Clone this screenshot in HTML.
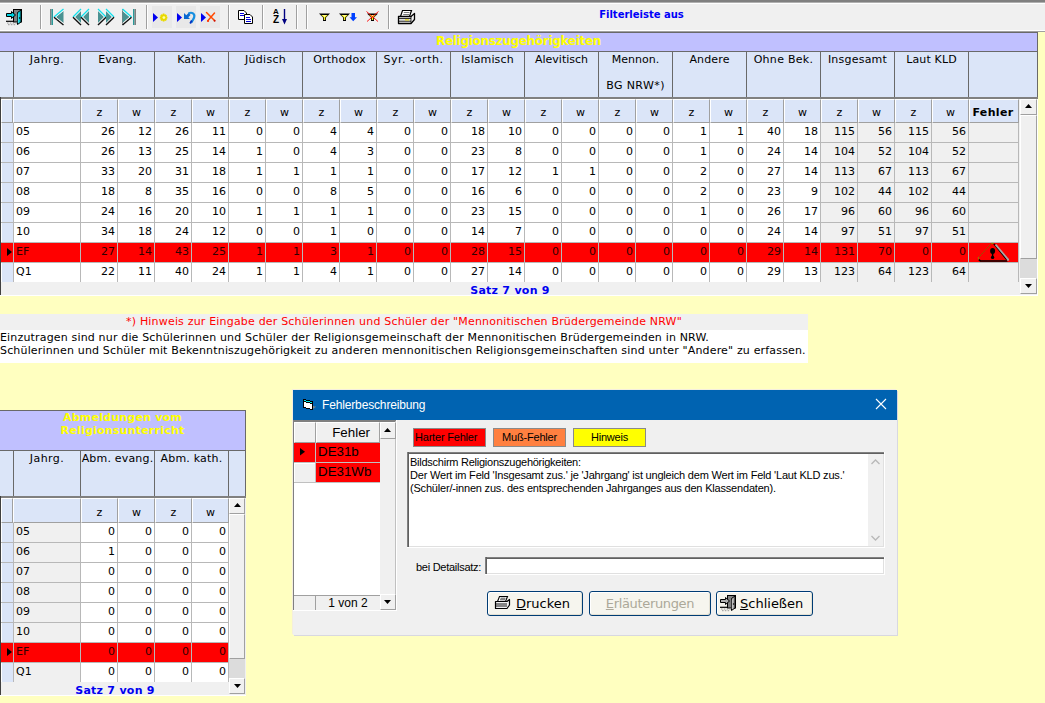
<!DOCTYPE html>
<html lang="de"><head><meta charset="utf-8"><title>Religionszugehörigkeiten</title>
<style>
html,body{margin:0;padding:0;}
body{width:1045px;height:703px;overflow:hidden;background:#ffffc0;position:relative;font-family:"DejaVu Sans","Liberation Sans",sans-serif;font-size:11px;color:#000;}
div,span{position:absolute;box-sizing:border-box;white-space:nowrap;}
svg{position:absolute;overflow:visible;}
.t{font-size:11px;line-height:13px;height:13px;}
.r{text-align:right;}
.c{text-align:center;}
.b{font-weight:bold;}
.sh{background:#dbe5f8;border-left:1px solid #fff;border-top:1px solid #fff;border-right:1px solid #a0a0a0;border-bottom:1px solid #a0a0a0;}
.ar{font-family:"Liberation Sans",sans-serif;}
.btn{background:#f6f5ee;border:1px solid #003c74;border-radius:3px;font-size:13px;line-height:15px;box-shadow:inset -1px -1px 0 #e4e1d4, inset 1px 1px 0 #fff;}
</style></head><body>

<div style="left:0px;top:0px;width:1045px;height:2px;background:#808080;"></div>
<div style="left:0px;top:2px;width:1045px;height:1px;background:#b0b0b0;"></div>
<div style="left:0px;top:3px;width:1045px;height:1px;background:#ffffff;"></div>
<div style="left:0px;top:4px;width:1045px;height:26px;background:#f0f0f0;"></div>
<div style="left:0px;top:30px;width:1045px;height:1px;background:#ffffff;"></div>
<div style="left:0px;top:31px;width:1045px;height:1px;background:#a0a0a0;"></div>
<svg style="left:0px;top:0px" width="30" height="30" viewBox="0 0 30 30"><rect x="13.5" y="9.5" width="8" height="12.5" fill="#808080" stroke="#000" stroke-width="1"/><path d="M17.5 12.5 L21 10 L21 22 L17.5 24.5 Z" fill="#00c8d4" stroke="#000" stroke-width="1" stroke-linejoin="round"/><path d="M18.2 13.5 V23" stroke="#60f0f8" stroke-width="0.8"/><circle cx="19.6" cy="18" r="0.8" fill="#000"/><path d="M6.5 13.5 H11.5 V11.5 L15.5 15 L11.5 18.5 V16.5 H6.5 Z" fill="#00d0dc" stroke="#000" stroke-width="1" stroke-linejoin="round"/><path d="M6 21.3 H13.5" stroke="#000" stroke-width="1.2"/><path d="M7 23 H17 M8 24.7 H16" stroke="#909090" stroke-width="0.9" stroke-dasharray="1.6 1.2"/></svg>
<div style="left:40px;top:5px;width:1px;height:24px;background:#a0a0a0;"></div>
<div style="left:41px;top:5px;width:1px;height:24px;background:#ffffff;"></div>
<svg style="left:0px;top:0px" width="140" height="30" viewBox="0 0 140 30"><rect x="50" y="9" width="1.5" height="16" fill="#808080"/><rect x="51.5" y="9" width="1.5" height="16" fill="#2a9a9a"/><path d="M56.1 17.0 L63.5 10.9 L63.5 23.1 Z" fill="#4a9292"/><path d="M55.3 17.0 L63.5 10.3" stroke="#ffffff" stroke-width="0.8" fill="none"/><path d="M55.3 17.0 L63.5 23.7" stroke="#ffffff" stroke-width="0.8" fill="none"/><path d="M54 17.0 L63.5 9" stroke="#10e0ec" stroke-width="1.3" fill="none"/><path d="M54 17.3 L63.5 25" stroke="#101010" stroke-width="1.4" fill="none"/><path d="M75.1 17.0 L81 10.9 L81 23.1 Z" fill="#4a9292"/><path d="M74.3 17.0 L81 10.3" stroke="#ffffff" stroke-width="0.8" fill="none"/><path d="M74.3 17.0 L81 23.7" stroke="#ffffff" stroke-width="0.8" fill="none"/><path d="M73 17.0 L81 9" stroke="#10e0ec" stroke-width="1.3" fill="none"/><path d="M73 17.3 L81 25" stroke="#101010" stroke-width="1.4" fill="none"/><path d="M83.1 17.0 L89 10.9 L89 23.1 Z" fill="#4a9292"/><path d="M82.3 17.0 L89 10.3" stroke="#ffffff" stroke-width="0.8" fill="none"/><path d="M82.3 17.0 L89 23.7" stroke="#ffffff" stroke-width="0.8" fill="none"/><path d="M81 17.0 L89 9" stroke="#10e0ec" stroke-width="1.3" fill="none"/><path d="M81 17.3 L89 25" stroke="#101010" stroke-width="1.4" fill="none"/><path d="M103.9 17.0 L98 10.9 L98 23.1 Z" fill="#4a9292"/><path d="M104.7 17.0 L98 10.3" stroke="#ffffff" stroke-width="0.8" fill="none"/><path d="M104.7 17.0 L98 23.7" stroke="#ffffff" stroke-width="0.8" fill="none"/><path d="M98 9 L106 17.0" stroke="#10e0ec" stroke-width="1.3" fill="none"/><path d="M106 17.3 L98 25" stroke="#101010" stroke-width="1.4" fill="none"/><path d="M111.9 17.0 L106 10.9 L106 23.1 Z" fill="#4a9292"/><path d="M112.7 17.0 L106 10.3" stroke="#ffffff" stroke-width="0.8" fill="none"/><path d="M112.7 17.0 L106 23.7" stroke="#ffffff" stroke-width="0.8" fill="none"/><path d="M106 9 L114 17.0" stroke="#10e0ec" stroke-width="1.3" fill="none"/><path d="M114 17.3 L106 25" stroke="#101010" stroke-width="1.4" fill="none"/><rect x="122" y="9" width="1.2" height="16" fill="#808080"/><path d="M129.4 17.0 L122.5 10.9 L122.5 23.1 Z" fill="#4a9292"/><path d="M130.2 17.0 L122.5 10.3" stroke="#ffffff" stroke-width="0.8" fill="none"/><path d="M130.2 17.0 L122.5 23.7" stroke="#ffffff" stroke-width="0.8" fill="none"/><path d="M122.5 9 L131.5 17.0" stroke="#10e0ec" stroke-width="1.3" fill="none"/><path d="M131.5 17.3 L122.5 25" stroke="#101010" stroke-width="1.4" fill="none"/><rect x="133" y="9" width="1.5" height="16" fill="#2a9a9a"/><rect x="134.5" y="9" width="1.5" height="16" fill="#808080"/></svg>
<div style="left:146px;top:5px;width:1px;height:24px;background:#a0a0a0;"></div>
<div style="left:147px;top:5px;width:1px;height:24px;background:#ffffff;"></div>
<div style="left:152px;top:6px;width:20px;height:22px;background:#e8e8e8;"></div>
<svg style="left:152px;top:6px" width="20" height="22" viewBox="0 0 20 22"><path d="M1 7 L6 11.5 L1 16 Z" fill="#0000f0"/></svg>
<div style="left:176px;top:6px;width:20px;height:22px;background:#e8e8e8;"></div>
<svg style="left:176px;top:6px" width="20" height="22" viewBox="0 0 20 22"><path d="M1 7 L6 11.5 L1 16 Z" fill="#0000f0"/></svg>
<div style="left:200px;top:6px;width:20px;height:22px;background:#e8e8e8;"></div>
<svg style="left:200px;top:6px" width="20" height="22" viewBox="0 0 20 22"><path d="M1 7 L6 11.5 L1 16 Z" fill="#0000f0"/></svg>
<svg style="left:152px;top:6px" width="20" height="22" viewBox="0 0 20 22"><circle cx="11.6" cy="11.6" r="3.3" fill="#f4e400"/><path d="M11.6 7.6 V15.6 M7.8 11.6 H15.4 M8.9 8.9 L14.3 14.3 M14.3 8.9 L8.9 14.3" stroke="#e8d800" stroke-width="1.7"/><circle cx="11.9" cy="11.6" r="1.4" fill="#ffffa0"/></svg>
<svg style="left:176px;top:6px" width="20" height="22" viewBox="0 0 20 22"><path d="M12.5 7.5 C16 5.5 19 8 18.2 11 C17.8 13 16.5 14 15.5 16.5" stroke="#1890e0" stroke-width="2.2" fill="none"/><path d="M15.8 14.5 L14.2 17.5" stroke="#0030c0" stroke-width="1.8"/><path d="M8 7 L8 13 L14 13 L12.3 11.2 L14.5 9 L12.5 7 L10.3 9.2 Z" fill="#0868d0"/></svg>
<svg style="left:200px;top:6px" width="20" height="22" viewBox="0 0 20 22"><path d="M6.5 6.5 L14.5 14.5 M14.5 7 L8 14.5" stroke="#ff4800" stroke-width="1.5" stroke-linecap="round"/><circle cx="8" cy="15" r="1.1" fill="#ff3000"/><circle cx="14.6" cy="14.8" r="1" fill="#d01000"/></svg>
<div style="left:228px;top:5px;width:1px;height:24px;background:#a0a0a0;"></div>
<div style="left:229px;top:5px;width:1px;height:24px;background:#ffffff;"></div>
<svg style="left:236px;top:8px" width="20" height="18" viewBox="0 0 20 18"><path d="M2.5 2.5 H8 L10.5 5 V11.5 H2.5 Z" fill="#fff" stroke="#000" stroke-width="1"/><path d="M4 5.5 H8 M4 7.5 H8" stroke="#0000e0" stroke-width="1"/><path d="M8.5 6.5 H14 L16.5 9 V15.5 H8.5 Z" fill="#fff" stroke="#000" stroke-width="1"/><path d="M10 9.5 H14 M10 11.5 H15 M10 13.5 H15" stroke="#0000e0" stroke-width="1"/></svg>
<div style="left:262px;top:5px;width:1px;height:24px;background:#a0a0a0;"></div>
<div style="left:263px;top:5px;width:1px;height:24px;background:#ffffff;"></div>
<div style="left:271px;top:8px;width:10px;height:8px;font-family:'Liberation Sans',sans-serif;font-size:8px;line-height:8px;font-weight:bold;text-align:center;">A</div>
<div style="left:271px;top:15px;width:10px;height:10px;font-family:'Liberation Sans',sans-serif;font-size:10px;line-height:10px;font-weight:bold;text-align:center;">Z</div>
<svg style="left:280px;top:8px" width="10" height="18" viewBox="0 0 10 18"><path d="M4.5 1 V13" stroke="#000080" stroke-width="1.4"/><path d="M2 11 L4.5 16.5 L7 11 Z" fill="#000080"/></svg>
<div style="left:296px;top:5px;width:1px;height:24px;background:#a0a0a0;"></div>
<div style="left:297px;top:5px;width:1px;height:24px;background:#ffffff;"></div>
<div style="left:306px;top:5px;width:1px;height:24px;background:#a0a0a0;"></div>
<div style="left:307px;top:5px;width:1px;height:24px;background:#ffffff;"></div>
<svg style="left:0px;top:0px" width="400" height="30" viewBox="0 0 400 30"><path d="M319 13.6 H330 L326 17.6 V21 H323 V17.6 Z" fill="#000"/><path d="M321.2 14.9 H327.8 L325.2 17.4 V20 H323.8 V17.4 Z" fill="#f8f020"/><path d="M322.6 15.2 H326.4 L324.5 17 Z" fill="#ffffb0"/><path d="M339 13.6 H350 L346 17.6 V21 H343 V17.6 Z" fill="#000"/><path d="M341.2 14.9 H347.8 L345.2 17.4 V20 H343.8 V17.4 Z" fill="#f8f020"/><path d="M342.6 15.2 H346.4 L344.5 17 Z" fill="#ffffb0"/><path d="M351.5 13 H355 V17.3 H357 L353.2 21.3 L349.5 17.3 H351.5 Z" fill="#0040ff"/><path d="M367 13.6 H378 L374 17.6 V21 H371 V17.6 Z" fill="#000"/><path d="M369.2 14.9 H375.8 L373.2 17.4 V20 H371.8 V17.4 Z" fill="#f8f020"/><path d="M370.6 15.2 H374.4 L372.5 17 Z" fill="#ffffb0"/><path d="M366.5 11.5 L378 21.5 M378.5 11.5 L367 21.5" stroke="#ff0000" stroke-width="0.9"/></svg>
<div style="left:388px;top:5px;width:1px;height:24px;background:#a0a0a0;"></div>
<div style="left:389px;top:5px;width:1px;height:24px;background:#ffffff;"></div>
<svg style="left:396px;top:8px" width="22" height="18" viewBox="0 0 22 18"><path d="M6.5 2.5 H15.5 L13.5 8.5 H4.5 Z" fill="#fff" stroke="#000" stroke-width="1.2"/><path d="M7.8 4.5 H13.5 M7.2 6.5 H13" stroke="#404040" stroke-width="0.7"/><path d="M2.5 8.5 H15 L18.5 5.5 V11.5 L15 15.5 H2.5 Z" fill="#f4f4f4" stroke="#000" stroke-width="1.3" stroke-linejoin="round"/><path d="M3 10.6 H15 M3 13.2 H15" stroke="#000" stroke-width="0.9"/><path d="M15 8.5 V15.5" stroke="#000" stroke-width="0.8"/><path d="M9 11.9 H13" stroke="#e8d800" stroke-width="1.2"/></svg>
<div style="left:561.5px;top:8px;width:160px;height:13px;font-size:10px;line-height:13px;color:#0000f8;font-weight:bold;text-align:center;">Filterleiste aus</div>
<div style="left:0px;top:32px;width:1038px;height:20px;background:#696969;"></div>
<div style="left:0px;top:33px;width:1037px;height:18px;background:#c0c0ff;"></div>
<div style="left:0px;top:34px;width:1037px;height:14px;font-size:12px;line-height:14px;font-weight:bold;color:#ffff00;text-align:center;letter-spacing:-0.3px;">Religionszugehörigkeiten</div>
<div style="left:0px;top:52px;width:1038px;height:45px;background:#696969;"></div>
<div style="left:0px;top:52px;width:13px;height:45px;background:#dbe5f8;"></div>
<div style="left:14px;top:52px;width:66px;height:45px;background:#dbe5f8;"></div>
<div class="t c" style="left:14px;top:53px;width:66px;height:13px;letter-spacing:0.45px;">Jahrg.</div>
<div style="left:81px;top:52px;width:73px;height:45px;background:#dbe5f8;"></div>
<div class="t c" style="left:81px;top:53px;width:73px;height:13px;letter-spacing:0.15px;">Evang.</div>
<div style="left:155px;top:52px;width:73px;height:45px;background:#dbe5f8;"></div>
<div class="t c" style="left:155px;top:53px;width:73px;height:13px;letter-spacing:0.04px;">Kath.</div>
<div style="left:229px;top:52px;width:73px;height:45px;background:#dbe5f8;"></div>
<div class="t c" style="left:229px;top:53px;width:73px;height:13px;letter-spacing:0.31px;">Jüdisch</div>
<div style="left:303px;top:52px;width:73px;height:45px;background:#dbe5f8;"></div>
<div class="t c" style="left:303px;top:53px;width:73px;height:13px;letter-spacing:0.2px;">Orthodox</div>
<div style="left:377px;top:52px;width:73px;height:45px;background:#dbe5f8;"></div>
<div class="t c" style="left:377px;top:53px;width:73px;height:13px;letter-spacing:0.53px;">Syr. -orth.</div>
<div style="left:451px;top:52px;width:73px;height:45px;background:#dbe5f8;"></div>
<div class="t c" style="left:451px;top:53px;width:73px;height:13px;letter-spacing:0.14px;">Islamisch</div>
<div style="left:525px;top:52px;width:73px;height:45px;background:#dbe5f8;"></div>
<div class="t c" style="left:525px;top:53px;width:73px;height:13px;letter-spacing:0px;">Alevitisch</div>
<div style="left:599px;top:52px;width:73px;height:45px;background:#dbe5f8;"></div>
<div class="t c" style="left:599px;top:53px;width:73px;height:13px;letter-spacing:0px;">Mennon.</div>
<div class="t c" style="left:599px;top:79px;width:73px;height:13px;letter-spacing:0.4px;">BG NRW*)</div>
<div style="left:673px;top:52px;width:73px;height:45px;background:#dbe5f8;"></div>
<div class="t c" style="left:673px;top:53px;width:73px;height:13px;letter-spacing:0.15px;">Andere</div>
<div style="left:747px;top:52px;width:73px;height:45px;background:#dbe5f8;"></div>
<div class="t c" style="left:747px;top:53px;width:73px;height:13px;letter-spacing:0.29px;">Ohne Bek.</div>
<div style="left:821px;top:52px;width:73px;height:45px;background:#dbe5f8;"></div>
<div class="t c" style="left:821px;top:53px;width:73px;height:13px;letter-spacing:0.22px;">Insgesamt</div>
<div style="left:895px;top:52px;width:73px;height:45px;background:#dbe5f8;"></div>
<div class="t c" style="left:895px;top:53px;width:73px;height:13px;letter-spacing:0.14px;">Laut KLD</div>
<div style="left:969px;top:52px;width:68px;height:45px;background:#dbe5f8;"></div>
<div style="left:0px;top:97px;width:1038px;height:199px;background:#f0f0f0;"></div>
<div style="left:0px;top:97px;width:1038px;height:2px;background:#808080;"></div>
<div style="left:0px;top:97px;width:1px;height:198px;background:#404040;"></div>
<div style="left:0px;top:295px;width:1038px;height:1px;background:#ffffff;"></div>
<div style="left:1037px;top:99px;width:1px;height:197px;background:#ffffff;"></div>
<div style="left:1036px;top:99px;width:1px;height:196px;background:#c8c8c8;"></div>
<div class="sh" style="left:1px;top:99px;width:12px;height:24px;"></div>
<div class="sh" style="left:13px;top:99px;width:68px;height:24px;"></div>
<div class="sh" style="left:81px;top:99px;width:37px;height:24px;"><div class="t c" style="left:0;top:6px;width:35px;">z</div></div>
<div class="sh" style="left:118px;top:99px;width:37px;height:24px;"><div class="t c" style="left:0;top:6px;width:35px;">w</div></div>
<div class="sh" style="left:155px;top:99px;width:37px;height:24px;"><div class="t c" style="left:0;top:6px;width:35px;">z</div></div>
<div class="sh" style="left:192px;top:99px;width:37px;height:24px;"><div class="t c" style="left:0;top:6px;width:35px;">w</div></div>
<div class="sh" style="left:229px;top:99px;width:37px;height:24px;"><div class="t c" style="left:0;top:6px;width:35px;">z</div></div>
<div class="sh" style="left:266px;top:99px;width:37px;height:24px;"><div class="t c" style="left:0;top:6px;width:35px;">w</div></div>
<div class="sh" style="left:303px;top:99px;width:37px;height:24px;"><div class="t c" style="left:0;top:6px;width:35px;">z</div></div>
<div class="sh" style="left:340px;top:99px;width:37px;height:24px;"><div class="t c" style="left:0;top:6px;width:35px;">w</div></div>
<div class="sh" style="left:377px;top:99px;width:37px;height:24px;"><div class="t c" style="left:0;top:6px;width:35px;">z</div></div>
<div class="sh" style="left:414px;top:99px;width:37px;height:24px;"><div class="t c" style="left:0;top:6px;width:35px;">w</div></div>
<div class="sh" style="left:451px;top:99px;width:37px;height:24px;"><div class="t c" style="left:0;top:6px;width:35px;">z</div></div>
<div class="sh" style="left:488px;top:99px;width:37px;height:24px;"><div class="t c" style="left:0;top:6px;width:35px;">w</div></div>
<div class="sh" style="left:525px;top:99px;width:37px;height:24px;"><div class="t c" style="left:0;top:6px;width:35px;">z</div></div>
<div class="sh" style="left:562px;top:99px;width:37px;height:24px;"><div class="t c" style="left:0;top:6px;width:35px;">w</div></div>
<div class="sh" style="left:599px;top:99px;width:37px;height:24px;"><div class="t c" style="left:0;top:6px;width:35px;">z</div></div>
<div class="sh" style="left:636px;top:99px;width:37px;height:24px;"><div class="t c" style="left:0;top:6px;width:35px;">w</div></div>
<div class="sh" style="left:673px;top:99px;width:37px;height:24px;"><div class="t c" style="left:0;top:6px;width:35px;">z</div></div>
<div class="sh" style="left:710px;top:99px;width:37px;height:24px;"><div class="t c" style="left:0;top:6px;width:35px;">w</div></div>
<div class="sh" style="left:747px;top:99px;width:37px;height:24px;"><div class="t c" style="left:0;top:6px;width:35px;">z</div></div>
<div class="sh" style="left:784px;top:99px;width:37px;height:24px;"><div class="t c" style="left:0;top:6px;width:35px;">w</div></div>
<div class="sh" style="left:821px;top:99px;width:37px;height:24px;"><div class="t c" style="left:0;top:6px;width:35px;">z</div></div>
<div class="sh" style="left:858px;top:99px;width:37px;height:24px;"><div class="t c" style="left:0;top:6px;width:35px;">w</div></div>
<div class="sh" style="left:895px;top:99px;width:37px;height:24px;"><div class="t c" style="left:0;top:6px;width:35px;">z</div></div>
<div class="sh" style="left:932px;top:99px;width:37px;height:24px;"><div class="t c" style="left:0;top:6px;width:35px;">w</div></div>
<div class="sh" style="left:969px;top:99px;width:50px;height:24px;"><div class="t c b" style="left:-1px;top:6px;width:48px;letter-spacing:0.35px;">Fehler</div></div>
<div style="left:1px;top:123px;width:13px;height:20px;background:#b8b8b8;"></div>
<div style="left:1px;top:123px;width:12px;height:19px;background:#dbe5f8;border-left:1px solid #fff;"></div>
<div style="left:13px;top:123px;width:1006px;height:20px;background:#b8b8b8;"></div>
<div style="left:14px;top:123px;width:66px;height:19px;background:#ffffff;"><div class="t" style="left:2px;top:2px;">05</div></div>
<div style="left:81px;top:123px;width:36px;height:19px;background:#ffffff;"><div class="t r" style="right:2px;top:2px;">26</div></div>
<div style="left:118px;top:123px;width:36px;height:19px;background:#ffffff;"><div class="t r" style="right:2px;top:2px;">12</div></div>
<div style="left:155px;top:123px;width:36px;height:19px;background:#ffffff;"><div class="t r" style="right:2px;top:2px;">26</div></div>
<div style="left:192px;top:123px;width:36px;height:19px;background:#ffffff;"><div class="t r" style="right:2px;top:2px;">11</div></div>
<div style="left:229px;top:123px;width:36px;height:19px;background:#ffffff;"><div class="t r" style="right:2px;top:2px;">0</div></div>
<div style="left:266px;top:123px;width:36px;height:19px;background:#ffffff;"><div class="t r" style="right:2px;top:2px;">0</div></div>
<div style="left:303px;top:123px;width:36px;height:19px;background:#ffffff;"><div class="t r" style="right:2px;top:2px;">4</div></div>
<div style="left:340px;top:123px;width:36px;height:19px;background:#ffffff;"><div class="t r" style="right:2px;top:2px;">4</div></div>
<div style="left:377px;top:123px;width:36px;height:19px;background:#ffffff;"><div class="t r" style="right:2px;top:2px;">0</div></div>
<div style="left:414px;top:123px;width:36px;height:19px;background:#ffffff;"><div class="t r" style="right:2px;top:2px;">0</div></div>
<div style="left:451px;top:123px;width:36px;height:19px;background:#ffffff;"><div class="t r" style="right:2px;top:2px;">18</div></div>
<div style="left:488px;top:123px;width:36px;height:19px;background:#ffffff;"><div class="t r" style="right:2px;top:2px;">10</div></div>
<div style="left:525px;top:123px;width:36px;height:19px;background:#ffffff;"><div class="t r" style="right:2px;top:2px;">0</div></div>
<div style="left:562px;top:123px;width:36px;height:19px;background:#ffffff;"><div class="t r" style="right:2px;top:2px;">0</div></div>
<div style="left:599px;top:123px;width:36px;height:19px;background:#ffffff;"><div class="t r" style="right:2px;top:2px;">0</div></div>
<div style="left:636px;top:123px;width:36px;height:19px;background:#ffffff;"><div class="t r" style="right:2px;top:2px;">0</div></div>
<div style="left:673px;top:123px;width:36px;height:19px;background:#ffffff;"><div class="t r" style="right:2px;top:2px;">1</div></div>
<div style="left:710px;top:123px;width:36px;height:19px;background:#ffffff;"><div class="t r" style="right:2px;top:2px;">1</div></div>
<div style="left:747px;top:123px;width:36px;height:19px;background:#ffffff;"><div class="t r" style="right:2px;top:2px;">40</div></div>
<div style="left:784px;top:123px;width:36px;height:19px;background:#ffffff;"><div class="t r" style="right:2px;top:2px;">18</div></div>
<div style="left:821px;top:123px;width:36px;height:19px;background:#f0f0f0;"><div class="t r" style="right:2px;top:2px;">115</div></div>
<div style="left:858px;top:123px;width:36px;height:19px;background:#f0f0f0;"><div class="t r" style="right:2px;top:2px;">56</div></div>
<div style="left:895px;top:123px;width:36px;height:19px;background:#f0f0f0;"><div class="t r" style="right:2px;top:2px;">115</div></div>
<div style="left:932px;top:123px;width:36px;height:19px;background:#f0f0f0;"><div class="t r" style="right:2px;top:2px;">56</div></div>
<div style="left:969px;top:123px;width:49px;height:19px;background:#f0f0f0;"></div>
<div style="left:1px;top:143px;width:13px;height:20px;background:#b8b8b8;"></div>
<div style="left:1px;top:143px;width:12px;height:19px;background:#dbe5f8;border-left:1px solid #fff;"></div>
<div style="left:13px;top:143px;width:1006px;height:20px;background:#b8b8b8;"></div>
<div style="left:14px;top:143px;width:66px;height:19px;background:#ffffff;"><div class="t" style="left:2px;top:2px;">06</div></div>
<div style="left:81px;top:143px;width:36px;height:19px;background:#ffffff;"><div class="t r" style="right:2px;top:2px;">26</div></div>
<div style="left:118px;top:143px;width:36px;height:19px;background:#ffffff;"><div class="t r" style="right:2px;top:2px;">13</div></div>
<div style="left:155px;top:143px;width:36px;height:19px;background:#ffffff;"><div class="t r" style="right:2px;top:2px;">25</div></div>
<div style="left:192px;top:143px;width:36px;height:19px;background:#ffffff;"><div class="t r" style="right:2px;top:2px;">14</div></div>
<div style="left:229px;top:143px;width:36px;height:19px;background:#ffffff;"><div class="t r" style="right:2px;top:2px;">1</div></div>
<div style="left:266px;top:143px;width:36px;height:19px;background:#ffffff;"><div class="t r" style="right:2px;top:2px;">0</div></div>
<div style="left:303px;top:143px;width:36px;height:19px;background:#ffffff;"><div class="t r" style="right:2px;top:2px;">4</div></div>
<div style="left:340px;top:143px;width:36px;height:19px;background:#ffffff;"><div class="t r" style="right:2px;top:2px;">3</div></div>
<div style="left:377px;top:143px;width:36px;height:19px;background:#ffffff;"><div class="t r" style="right:2px;top:2px;">0</div></div>
<div style="left:414px;top:143px;width:36px;height:19px;background:#ffffff;"><div class="t r" style="right:2px;top:2px;">0</div></div>
<div style="left:451px;top:143px;width:36px;height:19px;background:#ffffff;"><div class="t r" style="right:2px;top:2px;">23</div></div>
<div style="left:488px;top:143px;width:36px;height:19px;background:#ffffff;"><div class="t r" style="right:2px;top:2px;">8</div></div>
<div style="left:525px;top:143px;width:36px;height:19px;background:#ffffff;"><div class="t r" style="right:2px;top:2px;">0</div></div>
<div style="left:562px;top:143px;width:36px;height:19px;background:#ffffff;"><div class="t r" style="right:2px;top:2px;">0</div></div>
<div style="left:599px;top:143px;width:36px;height:19px;background:#ffffff;"><div class="t r" style="right:2px;top:2px;">0</div></div>
<div style="left:636px;top:143px;width:36px;height:19px;background:#ffffff;"><div class="t r" style="right:2px;top:2px;">0</div></div>
<div style="left:673px;top:143px;width:36px;height:19px;background:#ffffff;"><div class="t r" style="right:2px;top:2px;">1</div></div>
<div style="left:710px;top:143px;width:36px;height:19px;background:#ffffff;"><div class="t r" style="right:2px;top:2px;">0</div></div>
<div style="left:747px;top:143px;width:36px;height:19px;background:#ffffff;"><div class="t r" style="right:2px;top:2px;">24</div></div>
<div style="left:784px;top:143px;width:36px;height:19px;background:#ffffff;"><div class="t r" style="right:2px;top:2px;">14</div></div>
<div style="left:821px;top:143px;width:36px;height:19px;background:#f0f0f0;"><div class="t r" style="right:2px;top:2px;">104</div></div>
<div style="left:858px;top:143px;width:36px;height:19px;background:#f0f0f0;"><div class="t r" style="right:2px;top:2px;">52</div></div>
<div style="left:895px;top:143px;width:36px;height:19px;background:#f0f0f0;"><div class="t r" style="right:2px;top:2px;">104</div></div>
<div style="left:932px;top:143px;width:36px;height:19px;background:#f0f0f0;"><div class="t r" style="right:2px;top:2px;">52</div></div>
<div style="left:969px;top:143px;width:49px;height:19px;background:#f0f0f0;"></div>
<div style="left:1px;top:163px;width:13px;height:20px;background:#b8b8b8;"></div>
<div style="left:1px;top:163px;width:12px;height:19px;background:#dbe5f8;border-left:1px solid #fff;"></div>
<div style="left:13px;top:163px;width:1006px;height:20px;background:#b8b8b8;"></div>
<div style="left:14px;top:163px;width:66px;height:19px;background:#ffffff;"><div class="t" style="left:2px;top:2px;">07</div></div>
<div style="left:81px;top:163px;width:36px;height:19px;background:#ffffff;"><div class="t r" style="right:2px;top:2px;">33</div></div>
<div style="left:118px;top:163px;width:36px;height:19px;background:#ffffff;"><div class="t r" style="right:2px;top:2px;">20</div></div>
<div style="left:155px;top:163px;width:36px;height:19px;background:#ffffff;"><div class="t r" style="right:2px;top:2px;">31</div></div>
<div style="left:192px;top:163px;width:36px;height:19px;background:#ffffff;"><div class="t r" style="right:2px;top:2px;">18</div></div>
<div style="left:229px;top:163px;width:36px;height:19px;background:#ffffff;"><div class="t r" style="right:2px;top:2px;">1</div></div>
<div style="left:266px;top:163px;width:36px;height:19px;background:#ffffff;"><div class="t r" style="right:2px;top:2px;">1</div></div>
<div style="left:303px;top:163px;width:36px;height:19px;background:#ffffff;"><div class="t r" style="right:2px;top:2px;">1</div></div>
<div style="left:340px;top:163px;width:36px;height:19px;background:#ffffff;"><div class="t r" style="right:2px;top:2px;">1</div></div>
<div style="left:377px;top:163px;width:36px;height:19px;background:#ffffff;"><div class="t r" style="right:2px;top:2px;">0</div></div>
<div style="left:414px;top:163px;width:36px;height:19px;background:#ffffff;"><div class="t r" style="right:2px;top:2px;">0</div></div>
<div style="left:451px;top:163px;width:36px;height:19px;background:#ffffff;"><div class="t r" style="right:2px;top:2px;">17</div></div>
<div style="left:488px;top:163px;width:36px;height:19px;background:#ffffff;"><div class="t r" style="right:2px;top:2px;">12</div></div>
<div style="left:525px;top:163px;width:36px;height:19px;background:#ffffff;"><div class="t r" style="right:2px;top:2px;">1</div></div>
<div style="left:562px;top:163px;width:36px;height:19px;background:#ffffff;"><div class="t r" style="right:2px;top:2px;">1</div></div>
<div style="left:599px;top:163px;width:36px;height:19px;background:#ffffff;"><div class="t r" style="right:2px;top:2px;">0</div></div>
<div style="left:636px;top:163px;width:36px;height:19px;background:#ffffff;"><div class="t r" style="right:2px;top:2px;">0</div></div>
<div style="left:673px;top:163px;width:36px;height:19px;background:#ffffff;"><div class="t r" style="right:2px;top:2px;">2</div></div>
<div style="left:710px;top:163px;width:36px;height:19px;background:#ffffff;"><div class="t r" style="right:2px;top:2px;">0</div></div>
<div style="left:747px;top:163px;width:36px;height:19px;background:#ffffff;"><div class="t r" style="right:2px;top:2px;">27</div></div>
<div style="left:784px;top:163px;width:36px;height:19px;background:#ffffff;"><div class="t r" style="right:2px;top:2px;">14</div></div>
<div style="left:821px;top:163px;width:36px;height:19px;background:#f0f0f0;"><div class="t r" style="right:2px;top:2px;">113</div></div>
<div style="left:858px;top:163px;width:36px;height:19px;background:#f0f0f0;"><div class="t r" style="right:2px;top:2px;">67</div></div>
<div style="left:895px;top:163px;width:36px;height:19px;background:#f0f0f0;"><div class="t r" style="right:2px;top:2px;">113</div></div>
<div style="left:932px;top:163px;width:36px;height:19px;background:#f0f0f0;"><div class="t r" style="right:2px;top:2px;">67</div></div>
<div style="left:969px;top:163px;width:49px;height:19px;background:#f0f0f0;"></div>
<div style="left:1px;top:183px;width:13px;height:20px;background:#b8b8b8;"></div>
<div style="left:1px;top:183px;width:12px;height:19px;background:#dbe5f8;border-left:1px solid #fff;"></div>
<div style="left:13px;top:183px;width:1006px;height:20px;background:#b8b8b8;"></div>
<div style="left:14px;top:183px;width:66px;height:19px;background:#ffffff;"><div class="t" style="left:2px;top:2px;">08</div></div>
<div style="left:81px;top:183px;width:36px;height:19px;background:#ffffff;"><div class="t r" style="right:2px;top:2px;">18</div></div>
<div style="left:118px;top:183px;width:36px;height:19px;background:#ffffff;"><div class="t r" style="right:2px;top:2px;">8</div></div>
<div style="left:155px;top:183px;width:36px;height:19px;background:#ffffff;"><div class="t r" style="right:2px;top:2px;">35</div></div>
<div style="left:192px;top:183px;width:36px;height:19px;background:#ffffff;"><div class="t r" style="right:2px;top:2px;">16</div></div>
<div style="left:229px;top:183px;width:36px;height:19px;background:#ffffff;"><div class="t r" style="right:2px;top:2px;">0</div></div>
<div style="left:266px;top:183px;width:36px;height:19px;background:#ffffff;"><div class="t r" style="right:2px;top:2px;">0</div></div>
<div style="left:303px;top:183px;width:36px;height:19px;background:#ffffff;"><div class="t r" style="right:2px;top:2px;">8</div></div>
<div style="left:340px;top:183px;width:36px;height:19px;background:#ffffff;"><div class="t r" style="right:2px;top:2px;">5</div></div>
<div style="left:377px;top:183px;width:36px;height:19px;background:#ffffff;"><div class="t r" style="right:2px;top:2px;">0</div></div>
<div style="left:414px;top:183px;width:36px;height:19px;background:#ffffff;"><div class="t r" style="right:2px;top:2px;">0</div></div>
<div style="left:451px;top:183px;width:36px;height:19px;background:#ffffff;"><div class="t r" style="right:2px;top:2px;">16</div></div>
<div style="left:488px;top:183px;width:36px;height:19px;background:#ffffff;"><div class="t r" style="right:2px;top:2px;">6</div></div>
<div style="left:525px;top:183px;width:36px;height:19px;background:#ffffff;"><div class="t r" style="right:2px;top:2px;">0</div></div>
<div style="left:562px;top:183px;width:36px;height:19px;background:#ffffff;"><div class="t r" style="right:2px;top:2px;">0</div></div>
<div style="left:599px;top:183px;width:36px;height:19px;background:#ffffff;"><div class="t r" style="right:2px;top:2px;">0</div></div>
<div style="left:636px;top:183px;width:36px;height:19px;background:#ffffff;"><div class="t r" style="right:2px;top:2px;">0</div></div>
<div style="left:673px;top:183px;width:36px;height:19px;background:#ffffff;"><div class="t r" style="right:2px;top:2px;">2</div></div>
<div style="left:710px;top:183px;width:36px;height:19px;background:#ffffff;"><div class="t r" style="right:2px;top:2px;">0</div></div>
<div style="left:747px;top:183px;width:36px;height:19px;background:#ffffff;"><div class="t r" style="right:2px;top:2px;">23</div></div>
<div style="left:784px;top:183px;width:36px;height:19px;background:#ffffff;"><div class="t r" style="right:2px;top:2px;">9</div></div>
<div style="left:821px;top:183px;width:36px;height:19px;background:#f0f0f0;"><div class="t r" style="right:2px;top:2px;">102</div></div>
<div style="left:858px;top:183px;width:36px;height:19px;background:#f0f0f0;"><div class="t r" style="right:2px;top:2px;">44</div></div>
<div style="left:895px;top:183px;width:36px;height:19px;background:#f0f0f0;"><div class="t r" style="right:2px;top:2px;">102</div></div>
<div style="left:932px;top:183px;width:36px;height:19px;background:#f0f0f0;"><div class="t r" style="right:2px;top:2px;">44</div></div>
<div style="left:969px;top:183px;width:49px;height:19px;background:#f0f0f0;"></div>
<div style="left:1px;top:203px;width:13px;height:20px;background:#b8b8b8;"></div>
<div style="left:1px;top:203px;width:12px;height:19px;background:#dbe5f8;border-left:1px solid #fff;"></div>
<div style="left:13px;top:203px;width:1006px;height:20px;background:#b8b8b8;"></div>
<div style="left:14px;top:203px;width:66px;height:19px;background:#ffffff;"><div class="t" style="left:2px;top:2px;">09</div></div>
<div style="left:81px;top:203px;width:36px;height:19px;background:#ffffff;"><div class="t r" style="right:2px;top:2px;">24</div></div>
<div style="left:118px;top:203px;width:36px;height:19px;background:#ffffff;"><div class="t r" style="right:2px;top:2px;">16</div></div>
<div style="left:155px;top:203px;width:36px;height:19px;background:#ffffff;"><div class="t r" style="right:2px;top:2px;">20</div></div>
<div style="left:192px;top:203px;width:36px;height:19px;background:#ffffff;"><div class="t r" style="right:2px;top:2px;">10</div></div>
<div style="left:229px;top:203px;width:36px;height:19px;background:#ffffff;"><div class="t r" style="right:2px;top:2px;">1</div></div>
<div style="left:266px;top:203px;width:36px;height:19px;background:#ffffff;"><div class="t r" style="right:2px;top:2px;">1</div></div>
<div style="left:303px;top:203px;width:36px;height:19px;background:#ffffff;"><div class="t r" style="right:2px;top:2px;">1</div></div>
<div style="left:340px;top:203px;width:36px;height:19px;background:#ffffff;"><div class="t r" style="right:2px;top:2px;">1</div></div>
<div style="left:377px;top:203px;width:36px;height:19px;background:#ffffff;"><div class="t r" style="right:2px;top:2px;">0</div></div>
<div style="left:414px;top:203px;width:36px;height:19px;background:#ffffff;"><div class="t r" style="right:2px;top:2px;">0</div></div>
<div style="left:451px;top:203px;width:36px;height:19px;background:#ffffff;"><div class="t r" style="right:2px;top:2px;">23</div></div>
<div style="left:488px;top:203px;width:36px;height:19px;background:#ffffff;"><div class="t r" style="right:2px;top:2px;">15</div></div>
<div style="left:525px;top:203px;width:36px;height:19px;background:#ffffff;"><div class="t r" style="right:2px;top:2px;">0</div></div>
<div style="left:562px;top:203px;width:36px;height:19px;background:#ffffff;"><div class="t r" style="right:2px;top:2px;">0</div></div>
<div style="left:599px;top:203px;width:36px;height:19px;background:#ffffff;"><div class="t r" style="right:2px;top:2px;">0</div></div>
<div style="left:636px;top:203px;width:36px;height:19px;background:#ffffff;"><div class="t r" style="right:2px;top:2px;">0</div></div>
<div style="left:673px;top:203px;width:36px;height:19px;background:#ffffff;"><div class="t r" style="right:2px;top:2px;">1</div></div>
<div style="left:710px;top:203px;width:36px;height:19px;background:#ffffff;"><div class="t r" style="right:2px;top:2px;">0</div></div>
<div style="left:747px;top:203px;width:36px;height:19px;background:#ffffff;"><div class="t r" style="right:2px;top:2px;">26</div></div>
<div style="left:784px;top:203px;width:36px;height:19px;background:#ffffff;"><div class="t r" style="right:2px;top:2px;">17</div></div>
<div style="left:821px;top:203px;width:36px;height:19px;background:#f0f0f0;"><div class="t r" style="right:2px;top:2px;">96</div></div>
<div style="left:858px;top:203px;width:36px;height:19px;background:#f0f0f0;"><div class="t r" style="right:2px;top:2px;">60</div></div>
<div style="left:895px;top:203px;width:36px;height:19px;background:#f0f0f0;"><div class="t r" style="right:2px;top:2px;">96</div></div>
<div style="left:932px;top:203px;width:36px;height:19px;background:#f0f0f0;"><div class="t r" style="right:2px;top:2px;">60</div></div>
<div style="left:969px;top:203px;width:49px;height:19px;background:#f0f0f0;"></div>
<div style="left:1px;top:223px;width:13px;height:20px;background:#b8b8b8;"></div>
<div style="left:1px;top:223px;width:12px;height:19px;background:#dbe5f8;border-left:1px solid #fff;"></div>
<div style="left:13px;top:223px;width:1006px;height:20px;background:#b8b8b8;"></div>
<div style="left:14px;top:223px;width:66px;height:19px;background:#ffffff;"><div class="t" style="left:2px;top:2px;">10</div></div>
<div style="left:81px;top:223px;width:36px;height:19px;background:#ffffff;"><div class="t r" style="right:2px;top:2px;">34</div></div>
<div style="left:118px;top:223px;width:36px;height:19px;background:#ffffff;"><div class="t r" style="right:2px;top:2px;">18</div></div>
<div style="left:155px;top:223px;width:36px;height:19px;background:#ffffff;"><div class="t r" style="right:2px;top:2px;">24</div></div>
<div style="left:192px;top:223px;width:36px;height:19px;background:#ffffff;"><div class="t r" style="right:2px;top:2px;">12</div></div>
<div style="left:229px;top:223px;width:36px;height:19px;background:#ffffff;"><div class="t r" style="right:2px;top:2px;">0</div></div>
<div style="left:266px;top:223px;width:36px;height:19px;background:#ffffff;"><div class="t r" style="right:2px;top:2px;">0</div></div>
<div style="left:303px;top:223px;width:36px;height:19px;background:#ffffff;"><div class="t r" style="right:2px;top:2px;">1</div></div>
<div style="left:340px;top:223px;width:36px;height:19px;background:#ffffff;"><div class="t r" style="right:2px;top:2px;">0</div></div>
<div style="left:377px;top:223px;width:36px;height:19px;background:#ffffff;"><div class="t r" style="right:2px;top:2px;">0</div></div>
<div style="left:414px;top:223px;width:36px;height:19px;background:#ffffff;"><div class="t r" style="right:2px;top:2px;">0</div></div>
<div style="left:451px;top:223px;width:36px;height:19px;background:#ffffff;"><div class="t r" style="right:2px;top:2px;">14</div></div>
<div style="left:488px;top:223px;width:36px;height:19px;background:#ffffff;"><div class="t r" style="right:2px;top:2px;">7</div></div>
<div style="left:525px;top:223px;width:36px;height:19px;background:#ffffff;"><div class="t r" style="right:2px;top:2px;">0</div></div>
<div style="left:562px;top:223px;width:36px;height:19px;background:#ffffff;"><div class="t r" style="right:2px;top:2px;">0</div></div>
<div style="left:599px;top:223px;width:36px;height:19px;background:#ffffff;"><div class="t r" style="right:2px;top:2px;">0</div></div>
<div style="left:636px;top:223px;width:36px;height:19px;background:#ffffff;"><div class="t r" style="right:2px;top:2px;">0</div></div>
<div style="left:673px;top:223px;width:36px;height:19px;background:#ffffff;"><div class="t r" style="right:2px;top:2px;">0</div></div>
<div style="left:710px;top:223px;width:36px;height:19px;background:#ffffff;"><div class="t r" style="right:2px;top:2px;">0</div></div>
<div style="left:747px;top:223px;width:36px;height:19px;background:#ffffff;"><div class="t r" style="right:2px;top:2px;">24</div></div>
<div style="left:784px;top:223px;width:36px;height:19px;background:#ffffff;"><div class="t r" style="right:2px;top:2px;">14</div></div>
<div style="left:821px;top:223px;width:36px;height:19px;background:#f0f0f0;"><div class="t r" style="right:2px;top:2px;">97</div></div>
<div style="left:858px;top:223px;width:36px;height:19px;background:#f0f0f0;"><div class="t r" style="right:2px;top:2px;">51</div></div>
<div style="left:895px;top:223px;width:36px;height:19px;background:#f0f0f0;"><div class="t r" style="right:2px;top:2px;">97</div></div>
<div style="left:932px;top:223px;width:36px;height:19px;background:#f0f0f0;"><div class="t r" style="right:2px;top:2px;">51</div></div>
<div style="left:969px;top:223px;width:49px;height:19px;background:#f0f0f0;"></div>
<div style="left:1px;top:243px;width:13px;height:20px;background:#b8b8b8;"></div>
<div style="left:1px;top:243px;width:12px;height:19px;background:#ff0000;"></div>
<svg style="left:7px;top:248px" width="5" height="8"><path d="M0 0 L5 4 L0 8 Z" fill="#000"/></svg>
<div style="left:13px;top:243px;width:1006px;height:20px;background:#b8b8b8;"></div>
<div style="left:14px;top:243px;width:66px;height:19px;background:#ff0000;"><div class="t" style="left:2px;top:2px;color:#300000;">EF</div></div>
<div style="left:81px;top:243px;width:36px;height:19px;background:#ff0000;"><div class="t r" style="right:2px;top:2px;color:#300000;">27</div></div>
<div style="left:118px;top:243px;width:36px;height:19px;background:#ff0000;"><div class="t r" style="right:2px;top:2px;color:#300000;">14</div></div>
<div style="left:155px;top:243px;width:36px;height:19px;background:#ff0000;"><div class="t r" style="right:2px;top:2px;color:#300000;">43</div></div>
<div style="left:192px;top:243px;width:36px;height:19px;background:#ff0000;"><div class="t r" style="right:2px;top:2px;color:#300000;">25</div></div>
<div style="left:229px;top:243px;width:36px;height:19px;background:#ff0000;"><div class="t r" style="right:2px;top:2px;color:#300000;">1</div></div>
<div style="left:266px;top:243px;width:36px;height:19px;background:#ff0000;"><div class="t r" style="right:2px;top:2px;color:#300000;">1</div></div>
<div style="left:303px;top:243px;width:36px;height:19px;background:#ff0000;"><div class="t r" style="right:2px;top:2px;color:#300000;">3</div></div>
<div style="left:340px;top:243px;width:36px;height:19px;background:#ff0000;"><div class="t r" style="right:2px;top:2px;color:#300000;">1</div></div>
<div style="left:377px;top:243px;width:36px;height:19px;background:#ff0000;"><div class="t r" style="right:2px;top:2px;color:#300000;">0</div></div>
<div style="left:414px;top:243px;width:36px;height:19px;background:#ff0000;"><div class="t r" style="right:2px;top:2px;color:#300000;">0</div></div>
<div style="left:451px;top:243px;width:36px;height:19px;background:#ff0000;"><div class="t r" style="right:2px;top:2px;color:#300000;">28</div></div>
<div style="left:488px;top:243px;width:36px;height:19px;background:#ff0000;"><div class="t r" style="right:2px;top:2px;color:#300000;">15</div></div>
<div style="left:525px;top:243px;width:36px;height:19px;background:#ff0000;"><div class="t r" style="right:2px;top:2px;color:#300000;">0</div></div>
<div style="left:562px;top:243px;width:36px;height:19px;background:#ff0000;"><div class="t r" style="right:2px;top:2px;color:#300000;">0</div></div>
<div style="left:599px;top:243px;width:36px;height:19px;background:#ff0000;"><div class="t r" style="right:2px;top:2px;color:#300000;">0</div></div>
<div style="left:636px;top:243px;width:36px;height:19px;background:#ff0000;"><div class="t r" style="right:2px;top:2px;color:#300000;">0</div></div>
<div style="left:673px;top:243px;width:36px;height:19px;background:#ff0000;"><div class="t r" style="right:2px;top:2px;color:#300000;">0</div></div>
<div style="left:710px;top:243px;width:36px;height:19px;background:#ff0000;"><div class="t r" style="right:2px;top:2px;color:#300000;">0</div></div>
<div style="left:747px;top:243px;width:36px;height:19px;background:#ff0000;"><div class="t r" style="right:2px;top:2px;color:#300000;">29</div></div>
<div style="left:784px;top:243px;width:36px;height:19px;background:#ff0000;"><div class="t r" style="right:2px;top:2px;color:#300000;">14</div></div>
<div style="left:821px;top:243px;width:36px;height:19px;background:#ff0000;"><div class="t r" style="right:2px;top:2px;color:#300000;">131</div></div>
<div style="left:858px;top:243px;width:36px;height:19px;background:#ff0000;"><div class="t r" style="right:2px;top:2px;color:#300000;">70</div></div>
<div style="left:895px;top:243px;width:36px;height:19px;background:#ff0000;"><div class="t r" style="right:2px;top:2px;color:#300000;">0</div></div>
<div style="left:932px;top:243px;width:36px;height:19px;background:#ff0000;"><div class="t r" style="right:2px;top:2px;color:#300000;">0</div></div>
<div style="left:969px;top:243px;width:49px;height:19px;background:#ff0000;"></div>
<div style="left:1px;top:263px;width:13px;height:20px;background:#b8b8b8;"></div>
<div style="left:1px;top:263px;width:12px;height:19px;background:#dbe5f8;border-left:1px solid #fff;"></div>
<div style="left:13px;top:263px;width:1006px;height:20px;background:#b8b8b8;"></div>
<div style="left:14px;top:263px;width:66px;height:19px;background:#ffffff;"><div class="t" style="left:2px;top:2px;">Q1</div></div>
<div style="left:81px;top:263px;width:36px;height:19px;background:#ffffff;"><div class="t r" style="right:2px;top:2px;">22</div></div>
<div style="left:118px;top:263px;width:36px;height:19px;background:#ffffff;"><div class="t r" style="right:2px;top:2px;">11</div></div>
<div style="left:155px;top:263px;width:36px;height:19px;background:#ffffff;"><div class="t r" style="right:2px;top:2px;">40</div></div>
<div style="left:192px;top:263px;width:36px;height:19px;background:#ffffff;"><div class="t r" style="right:2px;top:2px;">24</div></div>
<div style="left:229px;top:263px;width:36px;height:19px;background:#ffffff;"><div class="t r" style="right:2px;top:2px;">1</div></div>
<div style="left:266px;top:263px;width:36px;height:19px;background:#ffffff;"><div class="t r" style="right:2px;top:2px;">1</div></div>
<div style="left:303px;top:263px;width:36px;height:19px;background:#ffffff;"><div class="t r" style="right:2px;top:2px;">4</div></div>
<div style="left:340px;top:263px;width:36px;height:19px;background:#ffffff;"><div class="t r" style="right:2px;top:2px;">1</div></div>
<div style="left:377px;top:263px;width:36px;height:19px;background:#ffffff;"><div class="t r" style="right:2px;top:2px;">0</div></div>
<div style="left:414px;top:263px;width:36px;height:19px;background:#ffffff;"><div class="t r" style="right:2px;top:2px;">0</div></div>
<div style="left:451px;top:263px;width:36px;height:19px;background:#ffffff;"><div class="t r" style="right:2px;top:2px;">27</div></div>
<div style="left:488px;top:263px;width:36px;height:19px;background:#ffffff;"><div class="t r" style="right:2px;top:2px;">14</div></div>
<div style="left:525px;top:263px;width:36px;height:19px;background:#ffffff;"><div class="t r" style="right:2px;top:2px;">0</div></div>
<div style="left:562px;top:263px;width:36px;height:19px;background:#ffffff;"><div class="t r" style="right:2px;top:2px;">0</div></div>
<div style="left:599px;top:263px;width:36px;height:19px;background:#ffffff;"><div class="t r" style="right:2px;top:2px;">0</div></div>
<div style="left:636px;top:263px;width:36px;height:19px;background:#ffffff;"><div class="t r" style="right:2px;top:2px;">0</div></div>
<div style="left:673px;top:263px;width:36px;height:19px;background:#ffffff;"><div class="t r" style="right:2px;top:2px;">0</div></div>
<div style="left:710px;top:263px;width:36px;height:19px;background:#ffffff;"><div class="t r" style="right:2px;top:2px;">0</div></div>
<div style="left:747px;top:263px;width:36px;height:19px;background:#ffffff;"><div class="t r" style="right:2px;top:2px;">29</div></div>
<div style="left:784px;top:263px;width:36px;height:19px;background:#ffffff;"><div class="t r" style="right:2px;top:2px;">13</div></div>
<div style="left:821px;top:263px;width:36px;height:19px;background:#f0f0f0;"><div class="t r" style="right:2px;top:2px;">123</div></div>
<div style="left:858px;top:263px;width:36px;height:19px;background:#f0f0f0;"><div class="t r" style="right:2px;top:2px;">64</div></div>
<div style="left:895px;top:263px;width:36px;height:19px;background:#f0f0f0;"><div class="t r" style="right:2px;top:2px;">123</div></div>
<div style="left:932px;top:263px;width:36px;height:19px;background:#f0f0f0;"><div class="t r" style="right:2px;top:2px;">64</div></div>
<div style="left:969px;top:263px;width:49px;height:19px;background:#f0f0f0;"></div>
<div style="left:1px;top:282px;width:1019px;height:3px;background:#f0f0f0;"></div>
<div style="left:1px;top:284px;width:1018px;height:13px;font-size:11px;line-height:13px;font-weight:bold;color:#0000f0;text-align:center;letter-spacing:0.27px;">Satz 7 von 9</div>
<div style="left:1020px;top:99px;width:17px;height:196px;background:#f0f0f0;"></div>
<div style="left:1020px;top:99px;width:17px;height:195px;background:#dcdcdc;"></div>
<div style="left:1020px;top:99px;width:17px;height:16px;background:#f0f0f0;border-left:1px solid #fff;border-top:1px solid #fff;border-right:1px solid #a0a0a0;border-bottom:1px solid #a0a0a0;"></div>
<svg style="left:1025px;top:104px" width="7" height="4"><path d="M0 4 L3.5 0 L7 4 Z" fill="#000"/></svg>
<div style="left:1020px;top:115px;width:17px;height:144px;background:#f0f0f0;border-left:1px solid #fff;border-top:1px solid #fff;border-right:1px solid #a0a0a0;border-bottom:1px solid #a0a0a0;"></div>
<div style="left:1020px;top:278px;width:17px;height:16px;background:#f0f0f0;border-left:1px solid #fff;border-top:1px solid #fff;border-right:1px solid #a0a0a0;border-bottom:1px solid #a0a0a0;"></div>
<svg style="left:1025px;top:284px" width="7" height="4"><path d="M0 0 L3.5 4 L7 0 Z" fill="#000"/></svg>
<svg style="left:975px;top:240px" width="40" height="24" viewBox="0 0 40 24"><path d="M16.3 3.4 H18.6" stroke="#8a8a00" stroke-width="1.1"/><path d="M15.6 4.3 L3.6 17.6" stroke="#707000" stroke-width="0.9" fill="none" stroke-dasharray="2.2 0.7"/><path d="M3.4 17 V19.4" stroke="#8a8a00" stroke-width="1"/><path d="M3.8 19.6 L5.4 20.9 H32.4" stroke="#000" stroke-width="1.5" fill="none"/><path d="M18.8 3.8 L31.6 19.6" stroke="#000" stroke-width="1.2" fill="none"/><path d="M20.6 4.6 L33.2 19.6" stroke="#a8a8a8" stroke-width="1.7" fill="none"/><circle cx="33" cy="19.8" r="1.1" fill="#a8a8a8"/><ellipse cx="17.6" cy="11.1" rx="2.5" ry="3" fill="#000"/><path d="M17.6 13 V17" stroke="#000" stroke-width="1.5"/><circle cx="17.6" cy="17.4" r="1.7" fill="#000"/></svg>
<div style="left:0px;top:314px;width:808px;height:16px;background:#f0f0f0;"></div>
<div style="left:0px;top:330px;width:808px;height:33px;background:#ffffff;"></div>
<div class="t" style="left:0px;top:315px;width:808px;height:13px;color:#ff0000;text-align:center;letter-spacing:0.185px;">*) Hinweis zur Eingabe der Schülerinnen und Schüler der "Mennonitischen Brüdergemeinde NRW"</div>
<div class="t" style="left:0px;top:331px;width:808px;height:13px;letter-spacing:0.168px;">Einzutragen sind nur die Schülerinnen und Schüler der Religionsgemeinschaft der Mennonitischen Brüdergemeinden in NRW.</div>
<div class="t" style="left:0px;top:344px;width:808px;height:13px;letter-spacing:0.168px;">Schülerinnen und Schüler mit Bekenntniszugehörigkeit zu anderen mennonitischen Religionsgemeinschaften sind unter "Andere" zu erfassen.</div>
<div style="left:0px;top:410px;width:246px;height:41px;background:#696969;"></div>
<div style="left:0px;top:411px;width:245px;height:39px;background:#c0c0ff;"></div>
<div style="left:0px;top:411px;width:245px;height:14px;font-size:12px;line-height:14px;font-weight:bold;color:#ffff00;text-align:center;letter-spacing:-0.3px;font-size:11px;letter-spacing:0.22px;">Abmeldungen vom</div>
<div style="left:0px;top:424px;width:245px;height:14px;font-size:12px;line-height:14px;font-weight:bold;color:#ffff00;text-align:center;letter-spacing:-0.3px;font-size:11px;letter-spacing:0.22px;">Religionsunterricht</div>
<div style="left:0px;top:451px;width:246px;height:45px;background:#696969;"></div>
<div style="left:0px;top:451px;width:13px;height:45px;background:#dbe5f8;"></div>
<div style="left:14px;top:451px;width:66px;height:45px;background:#dbe5f8;"></div>
<div class="t c" style="left:14px;top:452px;width:66px;height:13px;letter-spacing:0.45px;">Jahrg.</div>
<div style="left:81px;top:451px;width:73px;height:45px;background:#dbe5f8;"></div>
<div class="t c" style="left:81px;top:452px;width:73px;height:13px;letter-spacing:0.18px;">Abm. evang.</div>
<div style="left:155px;top:451px;width:73px;height:45px;background:#dbe5f8;"></div>
<div class="t c" style="left:155px;top:452px;width:73px;height:13px;letter-spacing:0.2px;">Abm. kath.</div>
<div style="left:229px;top:451px;width:16px;height:45px;background:#dbe5f8;"></div>
<div style="left:0px;top:496px;width:246px;height:200px;background:#f0f0f0;"></div>
<div style="left:0px;top:496px;width:246px;height:2px;background:#808080;"></div>
<div style="left:0px;top:496px;width:1px;height:199px;background:#404040;"></div>
<div style="left:0px;top:695px;width:246px;height:1px;background:#ffffff;"></div>
<div style="left:245px;top:498px;width:1px;height:198px;background:#ffffff;"></div>
<div style="left:244px;top:498px;width:1px;height:197px;background:#c8c8c8;"></div>
<div class="sh" style="left:1px;top:498px;width:12px;height:25px;"></div>
<div class="sh" style="left:13px;top:498px;width:68px;height:25px;"></div>
<div class="sh" style="left:81px;top:498px;width:37px;height:25px;"><div class="t c" style="left:0;top:7px;width:35px;">z</div></div>
<div class="sh" style="left:118px;top:498px;width:37px;height:25px;"><div class="t c" style="left:0;top:7px;width:35px;">w</div></div>
<div class="sh" style="left:155px;top:498px;width:37px;height:25px;"><div class="t c" style="left:0;top:7px;width:35px;">z</div></div>
<div class="sh" style="left:192px;top:498px;width:37px;height:25px;"><div class="t c" style="left:0;top:7px;width:35px;">w</div></div>
<div style="left:1px;top:523px;width:13px;height:20px;background:#b8b8b8;"></div>
<div style="left:1px;top:523px;width:12px;height:19px;background:#dbe5f8;border-left:1px solid #fff;"></div>
<div style="left:13px;top:523px;width:216px;height:20px;background:#b8b8b8;"></div>
<div style="left:14px;top:523px;width:66px;height:19px;background:#f0f0f0;"><div class="t" style="left:2px;top:2px;">05</div></div>
<div style="left:81px;top:523px;width:36px;height:19px;background:#ffffff;"><div class="t r" style="right:2px;top:2px;">0</div></div>
<div style="left:118px;top:523px;width:36px;height:19px;background:#ffffff;"><div class="t r" style="right:2px;top:2px;">0</div></div>
<div style="left:155px;top:523px;width:36px;height:19px;background:#ffffff;"><div class="t r" style="right:2px;top:2px;">0</div></div>
<div style="left:192px;top:523px;width:36px;height:19px;background:#ffffff;"><div class="t r" style="right:2px;top:2px;">0</div></div>
<div style="left:1px;top:543px;width:13px;height:20px;background:#b8b8b8;"></div>
<div style="left:1px;top:543px;width:12px;height:19px;background:#dbe5f8;border-left:1px solid #fff;"></div>
<div style="left:13px;top:543px;width:216px;height:20px;background:#b8b8b8;"></div>
<div style="left:14px;top:543px;width:66px;height:19px;background:#f0f0f0;"><div class="t" style="left:2px;top:2px;">06</div></div>
<div style="left:81px;top:543px;width:36px;height:19px;background:#ffffff;"><div class="t r" style="right:2px;top:2px;">1</div></div>
<div style="left:118px;top:543px;width:36px;height:19px;background:#ffffff;"><div class="t r" style="right:2px;top:2px;">0</div></div>
<div style="left:155px;top:543px;width:36px;height:19px;background:#ffffff;"><div class="t r" style="right:2px;top:2px;">0</div></div>
<div style="left:192px;top:543px;width:36px;height:19px;background:#ffffff;"><div class="t r" style="right:2px;top:2px;">0</div></div>
<div style="left:1px;top:563px;width:13px;height:20px;background:#b8b8b8;"></div>
<div style="left:1px;top:563px;width:12px;height:19px;background:#dbe5f8;border-left:1px solid #fff;"></div>
<div style="left:13px;top:563px;width:216px;height:20px;background:#b8b8b8;"></div>
<div style="left:14px;top:563px;width:66px;height:19px;background:#f0f0f0;"><div class="t" style="left:2px;top:2px;">07</div></div>
<div style="left:81px;top:563px;width:36px;height:19px;background:#ffffff;"><div class="t r" style="right:2px;top:2px;">0</div></div>
<div style="left:118px;top:563px;width:36px;height:19px;background:#ffffff;"><div class="t r" style="right:2px;top:2px;">0</div></div>
<div style="left:155px;top:563px;width:36px;height:19px;background:#ffffff;"><div class="t r" style="right:2px;top:2px;">0</div></div>
<div style="left:192px;top:563px;width:36px;height:19px;background:#ffffff;"><div class="t r" style="right:2px;top:2px;">0</div></div>
<div style="left:1px;top:583px;width:13px;height:20px;background:#b8b8b8;"></div>
<div style="left:1px;top:583px;width:12px;height:19px;background:#dbe5f8;border-left:1px solid #fff;"></div>
<div style="left:13px;top:583px;width:216px;height:20px;background:#b8b8b8;"></div>
<div style="left:14px;top:583px;width:66px;height:19px;background:#f0f0f0;"><div class="t" style="left:2px;top:2px;">08</div></div>
<div style="left:81px;top:583px;width:36px;height:19px;background:#ffffff;"><div class="t r" style="right:2px;top:2px;">0</div></div>
<div style="left:118px;top:583px;width:36px;height:19px;background:#ffffff;"><div class="t r" style="right:2px;top:2px;">0</div></div>
<div style="left:155px;top:583px;width:36px;height:19px;background:#ffffff;"><div class="t r" style="right:2px;top:2px;">0</div></div>
<div style="left:192px;top:583px;width:36px;height:19px;background:#ffffff;"><div class="t r" style="right:2px;top:2px;">0</div></div>
<div style="left:1px;top:603px;width:13px;height:20px;background:#b8b8b8;"></div>
<div style="left:1px;top:603px;width:12px;height:19px;background:#dbe5f8;border-left:1px solid #fff;"></div>
<div style="left:13px;top:603px;width:216px;height:20px;background:#b8b8b8;"></div>
<div style="left:14px;top:603px;width:66px;height:19px;background:#f0f0f0;"><div class="t" style="left:2px;top:2px;">09</div></div>
<div style="left:81px;top:603px;width:36px;height:19px;background:#ffffff;"><div class="t r" style="right:2px;top:2px;">0</div></div>
<div style="left:118px;top:603px;width:36px;height:19px;background:#ffffff;"><div class="t r" style="right:2px;top:2px;">0</div></div>
<div style="left:155px;top:603px;width:36px;height:19px;background:#ffffff;"><div class="t r" style="right:2px;top:2px;">0</div></div>
<div style="left:192px;top:603px;width:36px;height:19px;background:#ffffff;"><div class="t r" style="right:2px;top:2px;">0</div></div>
<div style="left:1px;top:623px;width:13px;height:20px;background:#b8b8b8;"></div>
<div style="left:1px;top:623px;width:12px;height:19px;background:#dbe5f8;border-left:1px solid #fff;"></div>
<div style="left:13px;top:623px;width:216px;height:20px;background:#b8b8b8;"></div>
<div style="left:14px;top:623px;width:66px;height:19px;background:#f0f0f0;"><div class="t" style="left:2px;top:2px;">10</div></div>
<div style="left:81px;top:623px;width:36px;height:19px;background:#ffffff;"><div class="t r" style="right:2px;top:2px;">0</div></div>
<div style="left:118px;top:623px;width:36px;height:19px;background:#ffffff;"><div class="t r" style="right:2px;top:2px;">0</div></div>
<div style="left:155px;top:623px;width:36px;height:19px;background:#ffffff;"><div class="t r" style="right:2px;top:2px;">0</div></div>
<div style="left:192px;top:623px;width:36px;height:19px;background:#ffffff;"><div class="t r" style="right:2px;top:2px;">0</div></div>
<div style="left:1px;top:643px;width:13px;height:20px;background:#b8b8b8;"></div>
<div style="left:1px;top:643px;width:12px;height:19px;background:#ff0000;"></div>
<svg style="left:7px;top:648px" width="5" height="8"><path d="M0 0 L5 4 L0 8 Z" fill="#000"/></svg>
<div style="left:13px;top:643px;width:216px;height:20px;background:#b8b8b8;"></div>
<div style="left:14px;top:643px;width:66px;height:19px;background:#ff0000;"><div class="t" style="left:2px;top:2px;color:#300000;">EF</div></div>
<div style="left:81px;top:643px;width:36px;height:19px;background:#ff0000;"><div class="t r" style="right:2px;top:2px;color:#300000;">0</div></div>
<div style="left:118px;top:643px;width:36px;height:19px;background:#ff0000;"><div class="t r" style="right:2px;top:2px;color:#300000;">0</div></div>
<div style="left:155px;top:643px;width:36px;height:19px;background:#ff0000;"><div class="t r" style="right:2px;top:2px;color:#300000;">0</div></div>
<div style="left:192px;top:643px;width:36px;height:19px;background:#ff0000;"><div class="t r" style="right:2px;top:2px;color:#300000;">0</div></div>
<div style="left:1px;top:663px;width:13px;height:20px;background:#b8b8b8;"></div>
<div style="left:1px;top:663px;width:12px;height:19px;background:#dbe5f8;border-left:1px solid #fff;"></div>
<div style="left:13px;top:663px;width:216px;height:20px;background:#b8b8b8;"></div>
<div style="left:14px;top:663px;width:66px;height:19px;background:#f0f0f0;"><div class="t" style="left:2px;top:2px;">Q1</div></div>
<div style="left:81px;top:663px;width:36px;height:19px;background:#ffffff;"><div class="t r" style="right:2px;top:2px;">0</div></div>
<div style="left:118px;top:663px;width:36px;height:19px;background:#ffffff;"><div class="t r" style="right:2px;top:2px;">0</div></div>
<div style="left:155px;top:663px;width:36px;height:19px;background:#ffffff;"><div class="t r" style="right:2px;top:2px;">0</div></div>
<div style="left:192px;top:663px;width:36px;height:19px;background:#ffffff;"><div class="t r" style="right:2px;top:2px;">0</div></div>
<div style="left:1px;top:682px;width:229px;height:3px;background:#f0f0f0;"></div>
<div style="left:1px;top:684px;width:228px;height:13px;font-size:11px;line-height:13px;font-weight:bold;color:#0000f0;text-align:center;letter-spacing:0.27px;">Satz 7 von 9</div>
<div style="left:229px;top:498px;width:17px;height:197px;background:#f0f0f0;"></div>
<div style="left:229px;top:498px;width:16px;height:196px;background:#dcdcdc;"></div>
<div style="left:229px;top:498px;width:16px;height:16px;background:#f0f0f0;border-left:1px solid #fff;border-top:1px solid #fff;border-right:1px solid #a0a0a0;border-bottom:1px solid #a0a0a0;"></div>
<svg style="left:234px;top:503px" width="7" height="4"><path d="M0 4 L3.5 0 L7 4 Z" fill="#000"/></svg>
<div style="left:229px;top:514px;width:16px;height:145px;background:#f0f0f0;border-left:1px solid #fff;border-top:1px solid #fff;border-right:1px solid #a0a0a0;border-bottom:1px solid #a0a0a0;"></div>
<div style="left:229px;top:678px;width:16px;height:16px;background:#f0f0f0;border-left:1px solid #fff;border-top:1px solid #fff;border-right:1px solid #a0a0a0;border-bottom:1px solid #a0a0a0;"></div>
<svg style="left:234px;top:684px" width="7" height="4"><path d="M0 0 L3.5 4 L7 0 Z" fill="#000"/></svg>
<div style="left:293px;top:390px;width:604px;height:245px;background:#f0f0f0;box-shadow:1px 1px 0 #d8d8e0, -1px -1px 0 #f4eede;"></div>
<div style="left:293px;top:390px;width:604px;height:30px;background:#0063b1;"></div>
<svg style="left:303px;top:399px" width="14" height="12" viewBox="0 0 14 12"><g shape-rendering="crispEdges"><polygon points="0,0 3,0 3,1 7,1 7,2 10,2 10,11 7,11 7,10 3,10 3,9 0,9" fill="#000"/><polygon points="1,2 3,2 3,3 7,3 7,4 9,4 9,10 7,10 7,9 3,9 3,8 1,8" fill="#fff"/><rect x="1" y="1" width="2" height="1" fill="#00e8e8"/><rect x="3" y="2" width="4" height="1" fill="#00e8e8"/><rect x="7" y="3" width="2" height="1" fill="#00e8e8"/><rect x="1" y="2" width="2" height="1" fill="#000"/><rect x="3" y="3" width="4" height="1" fill="#000"/><rect x="7" y="4" width="2" height="1" fill="#000"/></g><path d="M10.6 7 V9.5 M10.6 8.4 L12.6 7.8" stroke="#9a8c80" stroke-width="0.9" fill="none"/></svg>
<div style="left:322px;top:398px;width:200px;height:15px;font-family:'Liberation Sans',sans-serif;font-size:12px;line-height:15px;color:#fff;letter-spacing:-0.15px;">Fehlerbeschreibung</div>
<svg style="left:876px;top:399px" width="10" height="10" viewBox="0 0 10 10"><path d="M0 0 L10 10 M10 0 L0 10" stroke="#fff" stroke-width="1.1"/></svg>
<div style="left:293px;top:420px;width:104px;height:191px;background:#ffffff;"></div>
<div style="left:293px;top:420px;width:104px;height:2px;background:#808080;"></div>
<div style="left:293px;top:420px;width:1px;height:191px;background:#808080;"></div>
<div style="left:396px;top:420px;width:1px;height:191px;background:#ffffff;"></div>
<div style="left:395px;top:421px;width:1px;height:190px;background:#c0c0c0;"></div>
<div style="left:293px;top:610px;width:104px;height:1px;background:#ffffff;"></div>
<div style="left:294px;top:422px;width:22px;height:21px;background:#f0f0f0;border-left:1px solid #fff;border-top:1px solid #fff;border-right:1px solid #a0a0a0;border-bottom:1px solid #a0a0a0;"></div>
<div style="left:316px;top:422px;width:64px;height:21px;background:#f0f0f0;border-left:1px solid #fff;border-top:1px solid #fff;border-right:1px solid #a0a0a0;border-bottom:1px solid #a0a0a0;"><div class="ar" style="left:0;top:2px;width:62px;text-align:right;font-size:13.33px;line-height:16px;padding-right:9px;">Fehler</div></div>
<div style="left:294px;top:443px;width:86px;height:20px;background:#c0c0c0;"></div>
<div style="left:294px;top:443px;width:21px;height:19px;background:#ff0000;"></div>
<svg style="left:300px;top:448px" width="5" height="8" viewBox="0 0 5 8"><path d="M0 0 L5 3.7 L0 7.4 Z" fill="#000"/></svg>
<div style="left:316px;top:443px;width:64px;height:19px;background:#ff0000;"><div class="ar" style="left:2px;top:1px;font-size:13.33px;line-height:16px;color:#000;">DE31b</div></div>
<div style="left:294px;top:463px;width:86px;height:20px;background:#c0c0c0;"></div>
<div style="left:294px;top:463px;width:21px;height:19px;background:#f0f0f0;border-left:1px solid #fff;border-top:1px solid #fff;"></div>
<div style="left:316px;top:463px;width:64px;height:19px;background:#ff0000;"><div class="ar" style="left:2px;top:1px;font-size:13.33px;line-height:16px;color:#000;">DE31Wb</div></div>
<div style="left:294px;top:595px;width:86px;height:15px;background:#f0f0f0;border-top:1px solid #a0a0a0;"></div>
<div style="left:315px;top:595px;width:1px;height:15px;background:#a0a0a0;"></div>
<div style="left:316px;top:596px;width:64px;height:14px;font-family:'Liberation Sans',sans-serif;font-size:12px;line-height:14px;text-align:center;">1 von 2</div>
<div style="left:380px;top:422px;width:15px;height:188px;background:#f0f0f0;"></div>
<div style="left:380px;top:422px;width:16px;height:17px;background:#f0f0f0;border-left:1px solid #fff;border-top:1px solid #fff;border-right:1px solid #a0a0a0;border-bottom:1px solid #a0a0a0;"></div>
<svg style="left:384px;top:428px" width="7" height="4" viewBox="0 0 7 4"><path d="M0 4 L3.5 0 L7 4 Z" fill="#000"/></svg>
<div style="left:380px;top:594px;width:16px;height:16px;background:#f0f0f0;border-left:1px solid #fff;border-top:1px solid #fff;border-right:1px solid #a0a0a0;border-bottom:1px solid #a0a0a0;"></div>
<svg style="left:384px;top:600px" width="7" height="4" viewBox="0 0 7 4"><path d="M0 0 L3.5 4 L7 0 Z" fill="#000"/></svg>
<div style="left:413px;top:428px;width:73px;height:19px;background:#ff0000;font-family:'Liberation Sans',sans-serif;font-size:11px;line-height:17px;text-align:center;border:1px solid #8a8a8a;color:#000;letter-spacing:-0.2px;text-align:left;padding-left:1px;">Harter Fehler</div>
<div style="left:493px;top:428px;width:73px;height:19px;background:#ff8040;font-family:'Liberation Sans',sans-serif;font-size:11px;line-height:17px;text-align:center;border:1px solid #8a8a8a;letter-spacing:-0.2px;">Muß-Fehler</div>
<div style="left:573px;top:428px;width:73px;height:19px;background:#ffff00;font-family:'Liberation Sans',sans-serif;font-size:11px;line-height:17px;text-align:center;border:1px solid #8a8a8a;letter-spacing:-0.2px;">Hinweis</div>
<div style="left:407px;top:452px;width:478px;height:96px;background:#ffffff;"></div>
<div style="left:407px;top:452px;width:478px;height:1px;background:#808080;"></div>
<div style="left:407px;top:453px;width:478px;height:1px;background:#606060;"></div>
<div style="left:407px;top:452px;width:1px;height:96px;background:#808080;"></div>
<div style="left:408px;top:452px;width:1px;height:96px;background:#606060;"></div>
<div style="left:407px;top:547px;width:478px;height:1px;background:#ffffff;"></div>
<div style="left:884px;top:452px;width:1px;height:96px;background:#ffffff;"></div>
<div style="left:409px;top:546px;width:475px;height:1px;background:#e0e0e0;"></div>
<div style="left:883px;top:454px;width:1px;height:93px;background:#e0e0e0;"></div>
<div style="left:868px;top:454px;width:15px;height:92px;background:#f0f0f0;"></div>
<svg style="left:871px;top:459px" width="9" height="6" viewBox="0 0 9 6"><path d="M0.5 5 L4.5 1 L8.5 5" stroke="#b8b8b8" stroke-width="1.3" fill="none"/></svg>
<svg style="left:871px;top:535px" width="9" height="6" viewBox="0 0 9 6"><path d="M0.5 1 L4.5 5 L8.5 1" stroke="#b8b8b8" stroke-width="1.3" fill="none"/></svg>
<div style="left:410px;top:456px;width:450px;height:13px;font-family:'Liberation Sans',sans-serif;font-size:11px;line-height:13px;letter-spacing:-0.25px;">Bildschirm Religionszugehörigkeiten:</div>
<div style="left:410px;top:469px;width:450px;height:13px;font-family:'Liberation Sans',sans-serif;font-size:11px;line-height:13px;letter-spacing:-0.2px;">Der Wert im Feld 'Insgesamt zus.' je 'Jahrgang' ist ungleich dem Wert im Feld 'Laut KLD zus.'</div>
<div style="left:410px;top:482px;width:450px;height:13px;font-family:'Liberation Sans',sans-serif;font-size:11px;line-height:13px;letter-spacing:-0.19px;">(Schüler/-innen zus. des entsprechenden Jahrganges aus den Klassendaten).</div>
<div style="left:416px;top:561px;width:70px;height:13px;font-family:'Liberation Sans',sans-serif;font-size:11px;line-height:13px;letter-spacing:-0.27px;">bei Detailsatz:</div>
<div style="left:485px;top:557px;width:400px;height:18px;background:#ffffff;"></div>
<div style="left:485px;top:557px;width:400px;height:1px;background:#808080;"></div>
<div style="left:485px;top:558px;width:400px;height:1px;background:#606060;"></div>
<div style="left:485px;top:557px;width:1px;height:18px;background:#808080;"></div>
<div style="left:486px;top:557px;width:1px;height:18px;background:#606060;"></div>
<div style="left:485px;top:574px;width:400px;height:1px;background:#ffffff;"></div>
<div style="left:884px;top:557px;width:1px;height:18px;background:#ffffff;"></div>
<div style="left:487px;top:573px;width:397px;height:1px;background:#e0e0e0;"></div>
<div style="left:883px;top:559px;width:1px;height:15px;background:#e0e0e0;"></div>
<div class="btn" style="left:487px;top:591px;width:96px;height:25px;"></div>
<svg style="left:494px;top:595px" width="18" height="16" viewBox="0 0 18 16"><path d="M5.5 1.5 H13.5 L11.5 6.5 H3.5 Z" fill="#fff" stroke="#000" stroke-width="1.1"/><path d="M6.5 3.2 H11.5 M6 4.8 H11" stroke="#000" stroke-width="0.7"/><path d="M1.5 6.5 H13 L15.5 4.5 V10 L13 13.5 H1.5 Z" fill="#f0f0f0" stroke="#000" stroke-width="1.2" stroke-linejoin="round"/><path d="M1.5 9 H13 M1.5 11 H13" stroke="#000" stroke-width="0.9"/></svg>
<div style="left:516px;top:596px;width:60px;height:15px;font-size:13px;line-height:15px;"><u>D</u>rucken</div>
<div class="btn" style="left:589px;top:591px;width:122px;height:25px;"></div>
<div style="left:589px;top:596px;width:122px;height:15px;font-size:13px;line-height:15px;text-align:center;color:#aca899;letter-spacing:-0.34px;"><u>E</u>rläuterungen</div>
<div class="btn" style="left:716px;top:591px;width:97px;height:25px;"></div>
<svg style="left:714px;top:586px" width="30" height="30" viewBox="0 0 30 30"><rect x="13.5" y="9.5" width="8" height="12.5" fill="#808080" stroke="#000" stroke-width="1"/><path d="M17.5 12.5 L21 10 L21 22 L17.5 24.5 Z" fill="#a8a8a8" stroke="#000" stroke-width="1" stroke-linejoin="round"/><path d="M18.2 13.5 V23" stroke="#d8d8d8" stroke-width="0.8"/><circle cx="19.6" cy="18" r="0.8" fill="#000"/><path d="M6.5 13.5 H11.5 V11.5 L15.5 15 L11.5 18.5 V16.5 H6.5 Z" fill="#b0b0b0" stroke="#000" stroke-width="1" stroke-linejoin="round"/><path d="M6 21.3 H13.5" stroke="#000" stroke-width="1.2"/><path d="M7 23 H17 M8 24.7 H16" stroke="#909090" stroke-width="0.9" stroke-dasharray="1.6 1.2"/></svg>
<div style="left:740px;top:596px;width:70px;height:15px;font-size:13px;line-height:15px;"><u>S</u>chließen</div>
</body></html>
